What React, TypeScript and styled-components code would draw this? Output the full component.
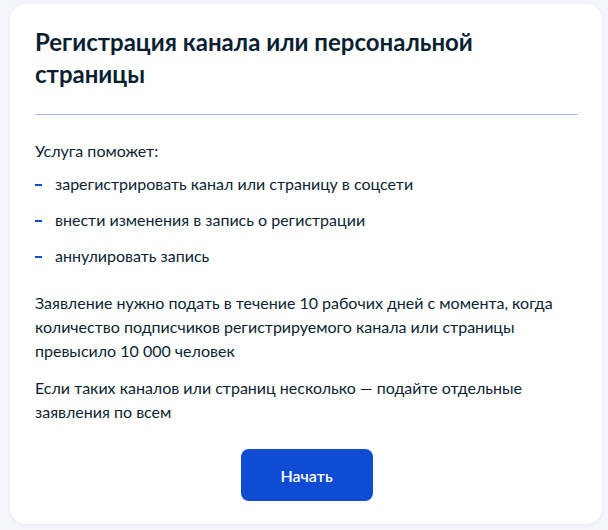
import React from 'react';
import styled, { createGlobalStyle } from 'styled-components';

const GlobalStyle = createGlobalStyle`
  html, body {
    margin: 0;
    padding: 0;
    background: #f4f6fb;
  }
  body {
    font-family: Lato, "Noto Sans", "Liberation Sans", sans-serif;
    color: #0b1f33;
  }
`;

const Page = styled.div`
  padding: 4px 6px 6px 10px;
`;

const Card = styled.section`
  background: #ffffff;
  border-radius: 16px;
  box-shadow: 0 1px 4px rgba(20, 40, 90, 0.06);
  padding: 22px 24px 23px 25px;
  display: flex;
  flex-direction: column;
`;

const Title = styled.h1`
  margin: 0;
  font-size: 24px;
  line-height: 32px;
  font-weight: 700;
  color: #0b1f33;
  padding-right: 60px;
`;

const Divider = styled.hr`
  margin: 24px 0 0;
  border: 0;
  height: 1px;
  background: #a3b9ea;
`;

const Text = styled.p<{ $gap?: number }>`
  margin: ${(p) => p.$gap ?? 0}px 0 0;
  font-size: 16px;
  line-height: 24px;
`;

const List = styled.ul`
  list-style: none;
  margin: 9px 0 0;
  padding: 0;
  display: flex;
  flex-direction: column;
  gap: 12px;
`;

const Item = styled.li`
  display: flex;
  align-items: flex-start;
  font-size: 16px;
  line-height: 24px;

  &::before {
    content: "";
    flex: 0 0 7px;
    height: 2px;
    margin: 12px 13px 0 0;
    background: #0d4cd3;
  }
`;

const Actions = styled.div`
  display: flex;
  justify-content: center;
  margin-top: 25px;
`;

const Button = styled.button`
  width: 132px;
  height: 52px;
  border: 0;
  border-radius: 8px;
  background: #0d4cd3;
  color: #ffffff;
  font-family: Lato, "Noto Sans", "Liberation Sans", sans-serif;
  font-size: 16px;
  font-weight: 600;
  cursor: pointer;
`;

const items = [
  'зарегистрировать канал или страницу в соцсети',
  'внести изменения в запись о регистрации',
  'аннулировать запись',
];

export default function App() {
  return (
    <Page>
      <GlobalStyle />
      <Card>
        <Title>Регистрация канала или персональной страницы</Title>
        <Divider />
        <Text $gap={24}>Услуга поможет:</Text>
        <List>
          {items.map((t) => (
            <Item key={t}>{t}</Item>
          ))}
        </List>
        <Text $gap={23}>
          Заявление нужно подать в течение 10 рабочих дней с момента, когда количество подписчиков
          регистрируемого канала или страницы превысило 10 000 человек
        </Text>
        <Text $gap={13}>
          Если таких каналов или страниц несколько — подайте отдельные заявления по всем
        </Text>
        <Actions>
          <Button>Начать</Button>
        </Actions>
      </Card>
    </Page>
  );
}
